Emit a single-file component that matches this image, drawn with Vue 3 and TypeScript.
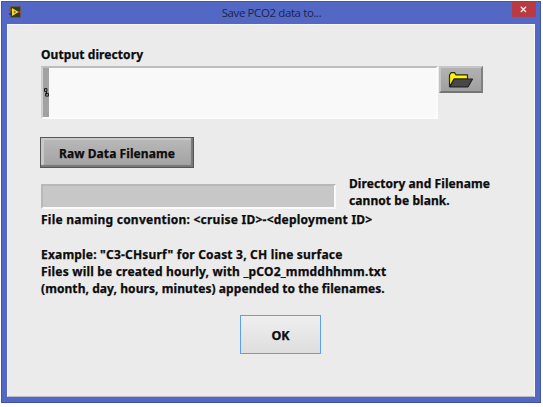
<script setup lang="ts">
import { ref } from 'vue'

const directory = ref('')
const filename = ref('')
const help: { text: string; cls: string }[] = [
  { text: 'Example: "C3-CHsurf" for Coast 3, CH line surface', cls: 'l-example' },
  { text: 'Files will be created hourly, with _pCO2_mmddhhmm.txt', cls: 'l-files' },
  { text: '(month, day, hours, minutes) appended to the filenames.', cls: 'l-month' },
]
</script>

<template>
  <div class="window">
    <header class="titlebar">
      <svg class="app-icon" width="13" height="12" viewBox="0 0 13 12">
        <rect x="1.5" y="0.5" width="10" height="11" fill="#35382c" stroke="#595a50" />
        <path d="M0 4h4" stroke="#e3232d" stroke-width="1.4" />
        <path d="M0 8h4" stroke="#1420d8" stroke-width="1.4" />
        <path d="M8 6h5" stroke="#d83a38" stroke-width="1.2" />
        <path d="M3 2v8L9.5 6z" fill="#f6e31c" />
        <path d="M4.5 6h2.4M5.7 4.8v2.4" stroke="#6a6410" stroke-width=".8" />
      </svg>
      <h1 class="title">Save PCO2 data to...</h1>
      <button class="close" aria-label="Close">
        <svg width="7" height="7" viewBox="0 0 7 7">
          <path d="M.8 .8l5.2 5.2M6 .8L.8 6" stroke="#f6e4e5" stroke-width="1.4" />
        </svg>
      </button>
    </header>
    <main class="client">
      <div class="label"><span class="l-output">Output directory</span></div>
      <div class="path-row">
        <div class="path">
          <div class="grip">
            <svg width="5" height="9" viewBox="0 0 5 9" fill="none" stroke="#151515">
              <path d="M.5 .6h2.4v2.8H.5zM2.4 3.4v3M1.6 5.3h2.8v2.8H1.6z" />
            </svg>
          </div>
          <input v-model="directory" class="path-input" />
        </div>
        <button class="browse" aria-label="Browse">
          <svg width="26" height="18" viewBox="0 0 26 18" stroke-linejoin="round">
            <path d="M1.5 15.5V4L3.2 1.7H6.5L8 3.8H19.5V8H6L1.8 15.5z" fill="#fff500" stroke="#28281c" stroke-width="1.2" />
            <path d="M6.3 8H24.5L20 15.8H1.8z" fill="#484848" stroke="#202020" stroke-width="1.2" />
          </svg>
        </button>
      </div>
      <button class="raw"><span class="l-raw">Raw Data Filename</span></button>
      <div class="name-row">
        <input v-model="filename" class="name" />
        <div class="warning">
          <p><span class="l-dir">Directory and Filename</span></p>
          <p><span class="l-blank">cannot be blank.</span></p>
        </div>
      </div>
      <p class="convention"><span class="l-conv">File naming convention: &lt;cruise ID&gt;-&lt;deployment ID&gt;</span></p>
      <div class="help">
        <p v-for="line in help" :key="line.cls"><span :class="line.cls">{{ line.text }}</span></p>
      </div>
      <button class="ok"><span>OK</span></button>
    </main>
  </div>
</template>

<style>
body {
  background: #fff;
}
</style>

<style scoped>
* {
  box-sizing: border-box;
}
.window {
  width: 540px;
  height: 402px;
  margin: 1px 0 0 1px;
  padding: 0 5px 5px 5px;
  border: 1px solid #4557a4;
  border-bottom-color: #3e4f9c;
  background: #5268c4;
  display: flex;
  flex-direction: column;
  font: bold 12px/17px "Noto Sans", "Open Sans", sans-serif;
  color: #0c0c0c;
}
p, h1 {
  margin: 0;
}
span {
  white-space: pre;
  -webkit-text-stroke: 0.25px #0c0c0c;
}
.l-output, .l-raw {
  letter-spacing: 0.08px;
}
.l-dir, .l-blank, .l-month {
  letter-spacing: 0.07px;
}
.l-conv {
  letter-spacing: 0.24px;
}
.l-example, .l-files {
  letter-spacing: 0.19px;
}
button, input {
  font: inherit;
  color: inherit;
  padding: 0;
  margin: 0;
  outline: 0;
}
.titlebar {
  height: 22px;
  flex: none;
  display: flex;
  align-items: flex-start;
  justify-content: space-between;
}
.app-icon {
  margin: 4px 0 0 2px;
}
.title {
  font: normal 11.5px/16px "Open Sans", sans-serif;
  letter-spacing: -0.4px;
  color: #1d2449;
  margin: 3px 0 0 9px;
}
.close {
  width: 24px;
  height: 15px;
  border: 0;
  margin-right: -1px;
  background: #b83b43;
  display: flex;
  align-items: center;
  justify-content: center;
}
.client {
  flex: 1;
  background: #ebebeb;
  border: 1px solid #f7f7f7;
  border-bottom-color: #b9bcc8;
  padding: 21px 0 0 33px;
  display: flex;
  flex-direction: column;
  align-items: flex-start;
}
.label {
  height: 20px;
}
.path-row {
  display: flex;
  gap: 1px;
}
.path {
  width: 397px;
  height: 53px;
  display: flex;
  border: 2px solid;
  border-color: #bdbdbd #fcfcfc #fcfcfc #cfcfcf;
}
.grip {
  width: 6px;
  background: #a2a2a2;
  display: flex;
  align-items: center;
  justify-content: flex-end;
}
.path-input {
  flex: 1;
  border: 0;
  background: #f9f9f9;
}
.browse {
  width: 44px;
  height: 27px;
  border: 2px solid;
  border-color: #c6c6c6 #808080 #747474 #c4c4c4;
  background: linear-gradient(#b2b2b2, #a0a0a0);
  display: flex;
  align-items: center;
  justify-content: center;
}
.raw {
  width: 154px;
  height: 31px;
  margin: 18px 0 0 -1px;
  padding-top: 2px;
  border: 1px solid #555;
  box-shadow: inset -2px -2px 1px #777, inset 3px 2px 1px #c9c9c9;
  background: linear-gradient(#b9b9b9, #a2a2a2);
}
.name-row {
  display: flex;
  margin-top: 7px;
  gap: 13px;
}
.name {
  width: 295px;
  height: 25px;
  margin-top: 9px;
  border: 2px solid;
  border-color: #b8b8b8 #fafafa #fafafa #b8b8b8;
  background: #c7c7c7;
}
.convention {
  margin-top: 2px;
}
.help {
  margin-top: 18px;
  line-height: 17px;
}
.ok {
  width: 81px;
  height: 39px;
  margin: 18px 0 0 199px;
  padding-top: 1px;
  border: 1px solid #5ba1f1;
  background: linear-gradient(#efefef, #dedede);
  font-size: 12.5px;
}
</style>
